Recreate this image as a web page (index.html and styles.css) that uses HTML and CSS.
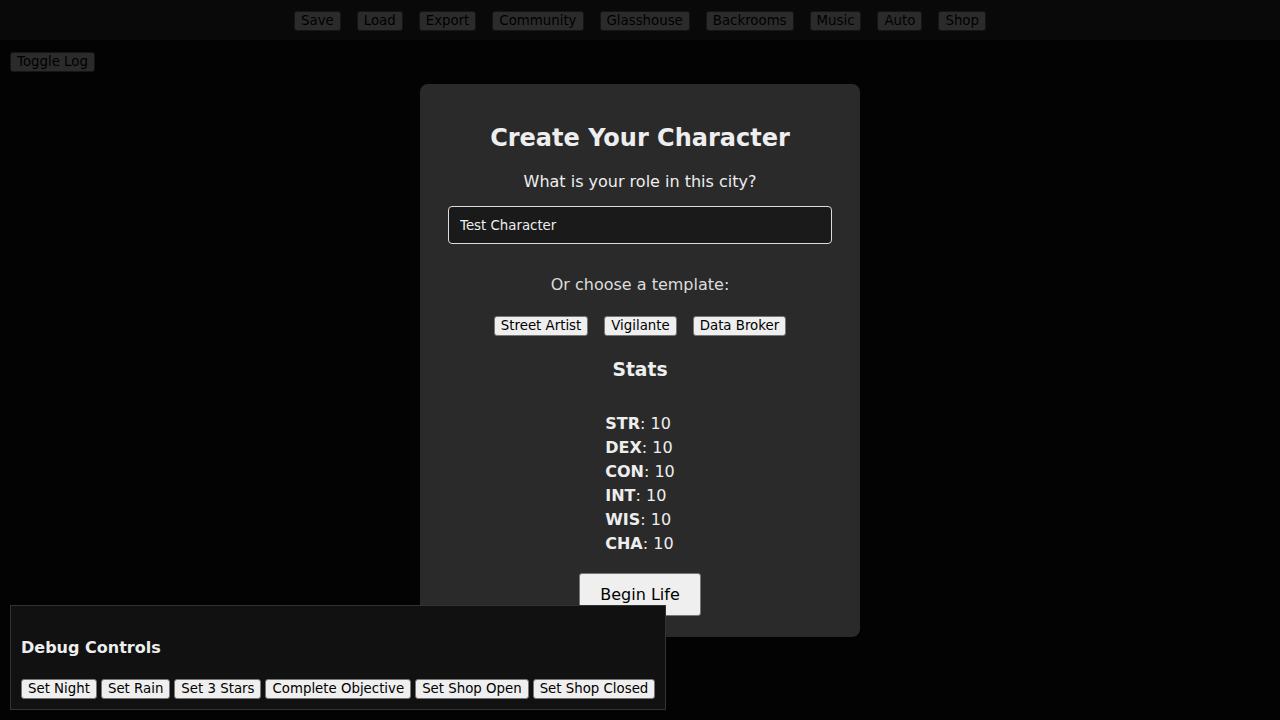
FILE: index.html
```html
<!DOCTYPE html>
<html lang="en">
<head>
<meta charset="utf-8">
<title>Create Your Character</title>
<link rel="stylesheet" href="styles.css">
</head>
<body>
  <nav class="topbar">
    <button class="btn">Save</button>
    <button class="btn">Load</button>
    <button class="btn">Export</button>
    <button class="btn">Community</button>
    <button class="btn">Glasshouse</button>
    <button class="btn">Backrooms</button>
    <button class="btn">Music</button>
    <button class="btn">Auto</button>
    <button class="btn">Shop</button>
  </nav>
  <div class="log-row">
    <button class="btn">Toggle Log</button>
  </div>

  <div class="overlay">
    <div class="modal">
      <h2 class="modal-title">Create Your Character</h2>
      <p class="modal-text">What is your role in this city?</p>
      <div class="field">
        <input class="name-input" type="text" value="Test Character">
      </div>
      <p class="modal-text modal-text-dim">Or choose a template:</p>
      <div class="templates">
        <button class="btn">Street Artist</button>
        <button class="btn">Vigilante</button>
        <button class="btn">Data Broker</button>
      </div>
      <h3 class="stats-title">Stats</h3>
      <div class="stats">
        <div class="stat"><b>STR</b>: 10</div>
        <div class="stat"><b>DEX</b>: 10</div>
        <div class="stat"><b>CON</b>: 10</div>
        <div class="stat"><b>INT</b>: 10</div>
        <div class="stat"><b>WIS</b>: 10</div>
        <div class="stat"><b>CHA</b>: 10</div>
      </div>
      <button class="btn btn-begin">Begin Life</button>
    </div>
  </div>

  <div class="debug">
    <h4 class="debug-title">Debug Controls</h4>
    <div class="debug-buttons">
      <button class="btn">Set Night</button>
      <button class="btn">Set Rain</button>
      <button class="btn">Set 3 Stars</button>
      <button class="btn">Complete Objective</button>
      <button class="btn">Set Shop Open</button>
      <button class="btn">Set Shop Closed</button>
    </div>
  </div>
</body>
</html>
```

FILE: styles.css
```css
* { box-sizing: border-box; }

html, body {
  margin: 0;
  height: 100%;
}

body {
  background: #111111;
  color: #eeeeee;
  font-family: "DejaVu Sans", "Noto Sans", sans-serif;
  overflow: hidden;
}

.btn {
  font-family: "DejaVu Sans", sans-serif;
  font-size: 13.333px;
  line-height: 16px;
  padding: 1px 6px;
  background: #efefef;
  color: #000000;
  border: 1px solid #767676;
  border-radius: 3px;
  cursor: pointer;
}

.topbar {
  background: #333333;
  display: flex;
  justify-content: center;
  gap: 16px;
  padding: 11px 0 9px;
}

.log-row {
  padding: 12px 10px;
  display: flex;
}

.overlay {
  position: fixed;
  inset: 0;
  background: rgba(0, 0, 0, 0.82);
  display: flex;
  align-items: center;
  justify-content: center;
  z-index: 10;
}

.modal {
  width: 440px;
  background: #2a2a2a;
  border-radius: 8px;
  padding: 20px 20px 21px;
  text-align: center;
  display: flex;
  flex-direction: column;
  align-items: center;
}

.modal-title {
  font-size: 24px;
  font-weight: bold;
  margin: 20px 0 20px;
  color: #eeeeee;
}

.modal-text {
  font-size: 16px;
  margin: 0 0 15px;
  color: #eeeeee;
}

.modal-text-dim {
  color: #dddddd;
  margin-top: 31px;
  margin-bottom: 16px;
}

.field {
  align-self: stretch;
  padding: 0 8px;
}

.name-input {
  display: block;
  width: 100%;
  height: 38px;
  padding: 1px 11px 0;
  background: #1a1a1a;
  color: #eeeeee;
  border: 1px solid #dddddd;
  border-radius: 4px;
  font-family: "DejaVu Sans", sans-serif;
  font-size: 13.333px;
}

.templates {
  display: flex;
  justify-content: center;
  gap: 16px;
  margin-top: 6px;
}

.stats-title {
  font-size: 18.72px;
  font-weight: bold;
  margin: 23px 0 32px;
}

.stats {
  text-align: left;
  font-size: 16px;
  line-height: 24px;
}

.btn-begin {
  font-size: 16px;
  line-height: 19px;
  padding: 11px 20px;
  margin-top: 17px;
}

.debug {
  position: fixed;
  left: 10px;
  bottom: 10px;
  z-index: 20;
  background: #111111;
  border: 1px solid #333333;
  padding: 10px;
}

.debug-title {
  font-size: 16px;
  font-weight: bold;
  margin: 22px 0 22px;
  color: #eeeeee;
}

.debug-buttons {
  display: flex;
  gap: 4px;
}
```
